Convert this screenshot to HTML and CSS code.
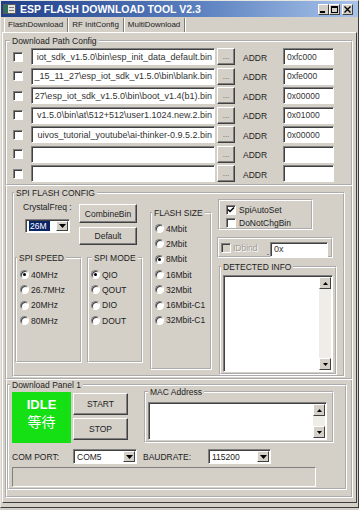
FILE: index.html
```html
<!DOCTYPE html>
<html>
<head>
<meta charset="utf-8">
<title>ESP FLASH DOWNLOAD TOOL V2.3</title>
<link rel="stylesheet" href="styles.css">
</head>
<body>

<div class="window">

  <div class="titlebar">
    <svg class="app_icon" width="13" height="10" viewBox="0 0 13 10">
      <rect x="0.5" y="0.5" width="12" height="9" fill="#e4e4e4" stroke="#5a5a5a"/>
      <rect x="1" y="1" width="4" height="8" fill="#2e7058"/>
      <rect x="6" y="3" width="5" height="1" fill="#7a7a7a"/>
      <rect x="6" y="6" width="5" height="1" fill="#7a7a7a"/>
    </svg>
    <span class="title">ESP FLASH DOWNLOAD TOOL V2.3</span>
    <div class="caption_btns">
      <span class="cap_btn"><svg width="7" height="7" viewBox="0 0 7 7"><rect x="0" y="5" width="5" height="2" fill="#000"/></svg></span>
      <span class="cap_btn"><svg width="7" height="7" viewBox="0 0 7 7"><rect x="0.5" y="0.5" width="6" height="6" fill="none" stroke="#000"/><rect x="0" y="0" width="7" height="2" fill="#000"/></svg></span>
      <span class="cap_btn close"><svg width="7" height="7" viewBox="0 0 7 7"><path d="M0.5 0.5 L6.5 6.5 M6.5 0.5 L0.5 6.5" stroke="#000" stroke-width="1.4"/></svg></span>
    </div>
  </div>

  <div class="tabs">
    <span class="tab active">FlashDownload</span>
    <span class="tab">RF InitConfig</span>
    <span class="tab">MultiDownload</span>
  </div>

  <div class="page">

    <!-- file list -->
    <fieldset class="group path_group">
      <legend>Download Path Config</legend>
      <div class="path_body">
        <div class="path_row">
          <span class="check"></span>
          <div class="field path"><span>iot_sdk_v1.5.0\bin\esp_init_data_default.bin</span></div>
          <span class="btn dots">...</span>
          <span class="addr_label">ADDR</span>
          <div class="field addr">0xfc000</div>
        </div>
        <div class="path_row">
          <span class="check"></span>
          <div class="field path"><span>_15_11_27\esp_iot_sdk_v1.5.0\bin\blank.bin</span></div>
          <span class="btn dots">...</span>
          <span class="addr_label">ADDR</span>
          <div class="field addr">0xfe000</div>
        </div>
        <div class="path_row">
          <span class="check"></span>
          <div class="field path"><span>27\esp_iot_sdk_v1.5.0\bin\boot_v1.4(b1).bin</span></div>
          <span class="btn dots">...</span>
          <span class="addr_label">ADDR</span>
          <div class="field addr">0x00000</div>
        </div>
        <div class="path_row">
          <span class="check"></span>
          <div class="field path"><span>v1.5.0\bin\at\512+512\user1.1024.new.2.bin</span></div>
          <span class="btn dots">...</span>
          <span class="addr_label">ADDR</span>
          <div class="field addr">0x01000</div>
        </div>
        <div class="path_row">
          <span class="check"></span>
          <div class="field path"><span>uivos_tutorial_youtube\ai-thinker-0.9.5.2.bin</span></div>
          <span class="btn dots">...</span>
          <span class="addr_label">ADDR</span>
          <div class="field addr">0x00000</div>
        </div>
        <div class="path_row">
          <span class="check"></span>
          <div class="field path"></div>
          <span class="btn dots">...</span>
          <span class="addr_label">ADDR</span>
          <div class="field addr"></div>
        </div>
        <div class="path_row">
          <span class="check"></span>
          <div class="field path"></div>
          <span class="btn dots">...</span>
          <span class="addr_label">ADDR</span>
          <div class="field addr"></div>
        </div>
      </div>
    </fieldset>

    <!-- spi settings -->
    <div class="frame spi_frame">
      <fieldset class="group spi_group">
        <legend>SPI FLASH CONFIG</legend>
        <div class="spi_body">

          <div class="spi_left">
            <div class="crystal_row">
              <div class="crystal">
                <div class="crystal_label">CrystalFreq :</div>
                <div class="combo crystal_combo">
                  <span class="combo_val"><span class="selected">26M</span></span>
                  <span class="drop"><svg width="7" height="4" viewBox="0 0 7 4"><polygon points="0,0 7,0 3.5,4" fill="#000"/></svg></span>
                </div>
              </div>
              <div class="btn_col">
                <span class="btn combine">CombineBin</span>
                <span class="btn default">Default</span>
              </div>
            </div>
            <div class="modes">
              <fieldset class="group speed_group">
                <legend>SPI SPEED</legend>
                <div class="radios speed_radios">
                  <div class="radio"><i class="on"></i>40MHz</div>
                  <div class="radio"><i></i>26.7MHz</div>
                  <div class="radio"><i></i>20MHz</div>
                  <div class="radio"><i></i>80MHz</div>
                </div>
              </fieldset>
              <fieldset class="group mode_group">
                <legend>SPI MODE</legend>
                <div class="radios mode_radios">
                  <div class="radio"><i class="on"></i>QIO</div>
                  <div class="radio"><i></i>QOUT</div>
                  <div class="radio"><i></i>DIO</div>
                  <div class="radio"><i></i>DOUT</div>
                </div>
              </fieldset>
            </div>
          </div>

          <fieldset class="group flash_group">
            <legend>FLASH SIZE</legend>
            <div class="radios flash_radios">
              <div class="radio"><i></i>4Mbit</div>
              <div class="radio"><i></i>2Mbit</div>
              <div class="radio"><i class="on"></i>8Mbit</div>
              <div class="radio"><i></i>16Mbit</div>
              <div class="radio"><i></i>32Mbit</div>
              <div class="radio"><i></i>16Mbit-C1</div>
              <div class="radio"><i></i>32Mbit-C1</div>
            </div>
          </fieldset>

          <div class="spi_right">
            <div class="box autoset">
              <div class="check_row">
                <span class="check"><svg width="8" height="8" viewBox="0 0 8 8"><path d="M1 3.5 L3 5.5 L7 1.5" fill="none" stroke="#000" stroke-width="1.5"/></svg></span>
                <span>SpiAutoSet</span>
              </div>
              <div class="check_row">
                <span class="check"></span>
                <span>DoNotChgBin</span>
              </div>
            </div>
            <div class="box bind">
              <span class="check off"></span>
              <span class="bind_label">IDbind</span>
              <span class="bind_dot">.</span>
              <div class="field bind_field">0x</div>
            </div>
            <fieldset class="group detected_group">
              <legend>DETECTED INFO</legend>
              <div class="detected_body">
                <div class="textarea detected_area">
                  <div class="vscroll">
                    <span class="sbtn"><svg width="5" height="3" viewBox="0 0 5 3"><polygon points="0,3 2.5,0 5,3" fill="#000"/></svg></span>
                    <span class="sbtn"><svg width="5" height="3" viewBox="0 0 5 3"><polygon points="0,0 5,0 2.5,3" fill="#000"/></svg></span>
                  </div>
                </div>
              </div>
            </fieldset>
          </div>

        </div>
      </fieldset>
    </div>

    <!-- download panel -->
    <div class="frame panel_frame">
      <fieldset class="group panel_group">
        <legend>Download Panel 1</legend>
        <div class="panel_body">
          <div class="panel_top">
            <div class="idle">
              <span class="idle_en">IDLE</span>
              <span class="idle_cn">等待</span>
            </div>
            <div class="idle_btns">
              <span class="btn big">START</span>
              <span class="btn big">STOP</span>
            </div>
            <fieldset class="group mac_group">
              <legend>MAC Address</legend>
              <div class="mac_body">
                <div class="textarea mac_area">
                  <div class="vscroll">
                    <span class="sbtn"><svg width="5" height="3" viewBox="0 0 5 3"><polygon points="0,3 2.5,0 5,3" fill="#000"/></svg></span>
                    <span class="sbtn"><svg width="5" height="3" viewBox="0 0 5 3"><polygon points="0,0 5,0 2.5,3" fill="#000"/></svg></span>
                  </div>
                </div>
              </div>
            </fieldset>
          </div>
          <div class="port_row">
            <span class="port_label">COM PORT:</span>
            <div class="combo com_combo">
              <span class="combo_val">COM5</span>
              <span class="drop"><svg width="7" height="4" viewBox="0 0 7 4"><polygon points="0,0 7,0 3.5,4" fill="#000"/></svg></span>
            </div>
            <span class="baud_label">BAUDRATE:</span>
            <div class="combo baud_combo">
              <span class="combo_val">115200</span>
              <span class="drop"><svg width="7" height="4" viewBox="0 0 7 4"><polygon points="0,0 7,0 3.5,4" fill="#000"/></svg></span>
            </div>
          </div>
          <div class="progress"></div>
        </div>
      </fieldset>
    </div>

  </div>
</div>

</body>
</html>
```

FILE: styles.css
```css
* {
  box-sizing: border-box;
}

body {
  margin: 0;
  background: #d4d0c8;
  font-family: "Liberation Sans", Arial, sans-serif;
  font-size: 8.5px;
  color: #222;
}

.window {
  width: 359px;
  height: 508px;
  border: 1px solid;
  border-color: #e8e6e0 #3c3c3c #3c3c3c #e8e6e0;
  display: flex;
  flex-direction: column;
}

/* title bar */
.titlebar {
  height: 16px;
  display: flex;
  align-items: center;
  padding: 0 5px 0 2px;
  background: linear-gradient(to right, #1f3f8a, #5b80bf 55%, #a8c4ea);
  color: #fff;
}
.app_icon {
  display: block;
  margin-right: 4px;
}
.title {
  font-weight: bold;
  font-size: 10.5px;
}
.caption_btns {
  margin-left: auto;
  display: flex;
}
.cap_btn {
  width: 11px;
  height: 11px;
  background: #d4d0c8;
  border: 1px solid;
  border-color: #fff #404040 #404040 #fff;
  display: flex;
  align-items: center;
  justify-content: center;
}
.cap_btn.close {
  margin-left: 2px;
}

/* tabs */
.tabs {
  height: 15px;
  display: flex;
  align-items: flex-end;
  padding-left: 3px;
  font-size: 8px;
}
.tab {
  height: 14px;
  line-height: 13px;
  padding: 0 4px;
  border-right: 1px solid #7c7a74;
  box-shadow: 1px 0 0 #fff;
}
.tab.active {
  border-left: 1px solid #fff;
  padding-left: 3px;
}

.page {
  flex: 1;
  margin: 0 1px 4px 1px;
  border: 1px solid;
  border-color: #fff #404040 #404040 #fff;
  padding: 3px 3px 0 2px;
  display: flex;
  flex-direction: column;
}

/* group boxes */
.group {
  margin: 0;
  padding: 0;
  min-width: 0;
  border: 2px groove #fff;
}
.group legend {
  height: 10px;
  line-height: 10px;
  padding: 0 2px;
  margin-left: 1px;
}
.frame {
  border: 2px groove #fff;
  border-top: none;
}
.box {
  border: 2px groove #fff;
}

/* common controls */
.check {
  flex: none;
  width: 10px;
  height: 10px;
  background: #fff;
  border: 1px solid;
  border-color: #808080 #fff #fff #808080;
  box-shadow: inset 1px 1px 0 #404040;
  display: flex;
  align-items: center;
  justify-content: center;
}
.check.off {
  background: #d4d0c8;
}
.field {
  flex: none;
  height: 17px;
  background: #fff;
  border: 1px solid;
  border-color: #808080 #fff #fff #808080;
  box-shadow: inset 1px 1px 0 #404040;
  display: flex;
  align-items: center;
  overflow: hidden;
  white-space: nowrap;
  padding: 0 2px 0 3px;
  font-size: 9px;
  color: #333;
}
.btn {
  flex: none;
  background: #d4d0c8;
  border: 1px solid;
  border-color: #fff #404040 #404040 #fff;
  box-shadow: inset -1px -1px 0 #808080;
  display: flex;
  align-items: center;
  justify-content: center;
}
.combo {
  display: flex;
  background: #fff;
  border: 1px solid;
  border-color: #808080 #fff #fff #808080;
  box-shadow: inset 1px 1px 0 #404040;
  padding: 1px;
}
.combo_val {
  flex: 1;
  display: flex;
  align-items: center;
  padding-left: 2px;
}
.drop {
  width: 12px;
  background: #d4d0c8;
  border: 1px solid;
  border-color: #fff #404040 #404040 #fff;
  display: flex;
  align-items: center;
  justify-content: center;
}
.textarea {
  background: #fff;
  border: 1px solid;
  border-color: #808080 #fff #fff #808080;
  box-shadow: inset 1px 1px 0 #404040;
  display: flex;
  justify-content: flex-end;
  padding: 1px;
}
.vscroll {
  width: 12px;
  background: #eeede8;
  display: flex;
  flex-direction: column;
  justify-content: space-between;
}
.sbtn {
  height: 12px;
  background: #d4d0c8;
  border: 1px solid;
  border-color: #fff #404040 #404040 #fff;
  display: flex;
  align-items: center;
  justify-content: center;
}
.radio {
  height: 15.3px;
  display: flex;
  align-items: center;
  white-space: nowrap;
}
.radio i {
  flex: none;
  width: 9px;
  height: 9px;
  margin-right: 2px;
  border-radius: 50%;
  background: #fff;
  border: 1px solid;
  border-color: #808080 #fff #fff #808080;
  box-shadow: inset 1px 1px 0 #404040;
  display: flex;
  align-items: center;
  justify-content: center;
}
.radio i.on::after {
  content: "";
  width: 3px;
  height: 3px;
  border-radius: 50%;
  background: #000;
}

/* download path config */
.path_group legend {
  margin-left: 3px;
}
.path_body {
  padding: 2px 0 2px 6px;
}
.path_row {
  display: flex;
  align-items: center;
}
.path_row + .path_row {
  margin-top: 2.5px;
}
.path_row .check {
  margin-right: 8px;
}
.field.path {
  width: 184px;
  justify-content: flex-end;
}
.btn.dots {
  width: 18px;
  height: 17px;
  margin-left: 2px;
  color: #555;
  font-size: 8px;
}
.addr_label {
  width: 48px;
  padding-left: 8px;
  padding-top: 2px;
}
.field.addr {
  width: 51px;
  font-size: 8.5px;
}

/* spi flash config */
.spi_frame {
  padding: 2px 6px 1px 5px;
}
.spi_group legend {
  margin-left: 0;
}
.spi_body {
  display: flex;
  align-items: flex-start;
  padding-left: 1px;
}
.spi_left {
  width: 131px;
}
.crystal_row {
  display: flex;
  height: 55px;
}
.crystal {
  width: 64px;
  padding: 4px 0 0 8px;
}
.crystal_label {
  line-height: 10px;
}
.crystal_combo {
  width: 45px;
  height: 14px;
  margin: 7px 0 0 2px;
}
.selected {
  background: #0a246a;
  color: #fff;
  padding: 0 3px 0 1px;
  line-height: 10px;
}
.btn_col {
  width: 58px;
  padding-top: 6px;
  display: flex;
  flex-direction: column;
  gap: 4px;
}
.btn.combine {
  height: 19px;
}
.btn.default {
  height: 18px;
}
.modes {
  display: flex;
  gap: 5px;
}
.speed_group {
  width: 67px;
}
.mode_group {
  width: 56px;
}
.mode_group legend {
  margin-left: 3px;
}
.radios {
  padding: 4px 0 0 3px;
}
.speed_radios {
  height: 98px;
}
.mode_radios {
  height: 91px;
  padding-left: 2px;
}
.flash_group {
  width: 62px;
  margin: 10px 0 0 4px;
}
.flash_radios {
  height: 150px;
  padding-top: 3px;
}
.spi_right {
  width: 120px;
  margin: 1px 0 0 5px;
}
.autoset {
  width: 95px;
  height: 31px;
  margin-left: 1px;
  padding: 2px 0 0 6px;
}
.check_row {
  height: 13px;
  display: flex;
  align-items: center;
  gap: 3px;
}
.bind {
  width: 116px;
  height: 21px;
  margin-top: 7px;
  padding-left: 2px;
  display: flex;
  align-items: center;
}
.bind_label {
  margin-left: 2px;
  color: #a09d96;
  text-shadow: 1px 1px 0 #fff;
}
.bind_dot {
  margin-left: auto;
  align-self: flex-end;
  line-height: 8px;
}
.field.bind_field {
  width: 58px;
  height: 15px;
  margin: 3px 3px 0 1px;
}
.detected_group {
  width: 118px;
  margin: 4px 0 0 2px;
}
.detected_group legend {
  margin-left: 0;
}
.detected_body {
  padding: 3px 2px 1px 2px;
}
.detected_area {
  width: 110px;
  height: 97px;
}

/* download panel */
.panel_frame {
  padding: 0 4px 6px 0;
}
.panel_body {
  padding: 0 0 1px 3px;
}
.panel_top {
  display: flex;
  align-items: flex-start;
}
.idle {
  width: 59px;
  height: 51px;
  margin-top: 2px;
  padding-top: 5px;
  background: #14e014;
  color: #fff;
  display: flex;
  flex-direction: column;
  align-items: center;
}
.idle_en {
  font-size: 13px;
  font-weight: bold;
  line-height: 16px;
}
.idle_cn {
  font-family: "Noto Sans CJK SC", sans-serif;
  font-size: 14px;
  line-height: 16px;
}
.idle_btns {
  width: 55px;
  margin: 3px 0 0 2px;
  display: flex;
  flex-direction: column;
  gap: 3px;
}
.btn.big {
  height: 22px;
}
.mac_group {
  width: 190px;
  margin: -3px 0 0 16px;
}
.mac_group legend {
  margin-left: 2px;
}
.mac_body {
  padding: 5px 0 1px 2px;
}
.mac_area {
  width: 179px;
  height: 38px;
}
.port_row {
  display: flex;
  align-items: center;
  margin-top: 6px;
}
.port_label {
  width: 61px;
}
.com_combo {
  width: 64px;
  height: 15px;
}
.baud_label {
  width: 65px;
  margin-left: 6px;
}
.baud_combo {
  width: 63px;
  height: 15px;
}
.progress {
  width: 304px;
  height: 20px;
  margin-top: 3px;
  border: 1px solid;
  border-color: #808080 #fff #fff #808080;
}
```
